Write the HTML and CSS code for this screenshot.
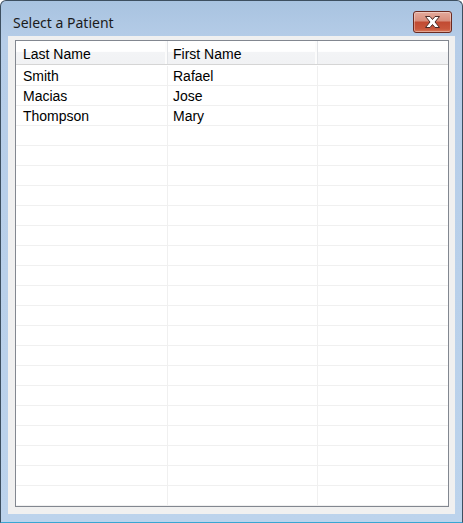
FILE: index.html
```html
<!DOCTYPE html>
<html lang="en">
<head>
    <meta charset="UTF-8">
    <title>Select a Patient</title>
    <link rel="stylesheet" href="styles.css">
</head>
<body>
<div class="window">
    <div class="window__title">
        <span class="window__caption">Select a Patient</span>
        <button class="window__close" title="Close">
            <svg width="19" height="14" viewBox="0 0 19 14">
                <path d="M2.5 1.5 L7 1.5 L9.5 4.5 L12 1.5 L16.5 1.5 L12 7 L16.5 12.5 L12 12.5 L9.5 9.5 L7 12.5 L2.5 12.5 L7 7 Z"
                      fill="#ffffff" stroke="#4a2a26" stroke-width="1" stroke-linejoin="round"/>
            </svg>
        </button>
    </div>
    <div class="window__client">
        <div class="listview">
            <div class="listview__header">
                <div class="listview__col">Last Name</div>
                <div class="listview__col">First Name</div>
                <div class="listview__col"></div>
            </div>
            <div class="listview__body" id="rows"></div>
        </div>
    </div>
</div>

<script>
    let patients = [
        ["Smith", "Rafael"],
        ["Macias", "Jose"],
        ["Thompson", "Mary"]
    ];
    let rows = document.getElementById("rows");
    for (let i = 0; i < 22; i++) {
        let p = patients[i] || ["", ""];
        let row = document.createElement("div");
        row.className = "listview__row";
        row.innerHTML = '<div class="listview__cell">' + p[0] + '</div>' +
            '<div class="listview__cell">' + p[1] + '</div>' +
            '<div class="listview__cell"></div>';
        rows.appendChild(row);
    }
</script>
</body>
</html>
```

FILE: styles.css
```css
* {
    margin: 0;
    padding: 0;
    box-sizing: border-box;
}

body {
    background: #ffffff;
}

.window {
    display: flex;
    flex-direction: column;
    width: 463px;
    height: 523px;
    border: 1px solid #3d4f60;
    border-bottom-color: #39a6d3;
    border-radius: 6px 6px 0 0;
    background: linear-gradient(to bottom, #a8c3e0 0, #b6cde8 40px, #bcd3ec 100%);
    padding: 0 7px 8px 7px;
}

.window__title {
    display: flex;
    align-items: flex-start;
    justify-content: space-between;
    height: 35px;
    flex-shrink: 0;
}

.window__caption {
    margin: 12px 0 0 5px;
    font: 14px "Noto Sans", "DejaVu Sans", sans-serif;
    color: #1b1b1b;
    line-height: 20px;
}

.window__close {
    display: flex;
    align-items: center;
    justify-content: center;
    width: 39px;
    height: 22px;
    margin: 10px 3px 0 0;
    border: 1px solid #6b2a20;
    border-radius: 3px;
    background: linear-gradient(to bottom, #e4aa9c 0, #d88d7b 45%, #c14a32 50%, #c9573c 85%, #d97c5d 100%);
    box-shadow: inset 0 0 0 1px rgba(255, 255, 255, 0.35);
}

.window__client {
    flex: 1;
    display: flex;
    background: #f0f0f0;
    padding: 4px 6px 7px 7px;
}

.listview {
    flex: 1;
    display: flex;
    flex-direction: column;
    background: #ffffff;
    border: 1px solid #828790;
    overflow: hidden;
    font: 14px "Liberation Sans", Arial, sans-serif;
    color: #000000;
}

.listview__header,
.listview__row {
    display: grid;
    grid-template-columns: 152px 150px 1fr;
}

.listview__header {
    height: 24px;
    border-bottom: 1px solid #d5d5d5;
    background: linear-gradient(to bottom, #ffffff 0, #ffffff 45%, #f3f4f6 50%, #f1f2f4 100%);
    margin-bottom: 1px;
}

.listview__col {
    padding: 3px 0 0 7px;
    line-height: 20px;
    border-right: 1px solid #e3e5e8;
    box-shadow: inset -2px 0 0 #fcfcfc;
}

.listview__col:nth-child(2) {
    padding-left: 5px;
}

.listview__col:last-child {
    border-right: none;
    box-shadow: none;
}

.listview__row {
    height: 20px;
    border-bottom: 1px solid #f0f0f0;
}

.listview__cell {
    padding: 2px 0 0 7px;
    line-height: 17px;
    border-right: 1px solid #f0f0f0;
}

.listview__cell:nth-child(2) {
    padding-left: 5px;
}

.listview__cell:last-child {
    border-right: none;
}
```
